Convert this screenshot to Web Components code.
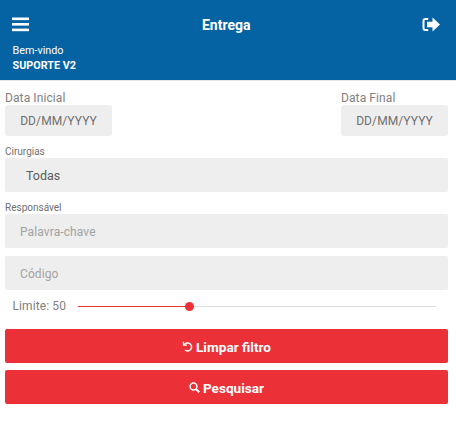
<!DOCTYPE html>
<html lang="pt"><head><meta charset="utf-8"><title>Entrega</title>
<style>
html,body{margin:0;padding:0;background:#fff;font-family:Roboto,"Liberation Sans",sans-serif;}
app-form{display:flex;flex-direction:column;padding:0 8px 0 5px;}
</style></head><body>
<app-header></app-header>
<app-form>
  <date-row></date-row>
  <field-box label="Cirurgias" value="Todas" style="margin-top:9px"></field-box>
  <field-box label="Responsável" placeholder="Palavra-chave" style="margin-top:9px"></field-box>
  <field-box placeholder="Código" style="margin-top:8px"></field-box>
  <limit-slider></limit-slider>
  <red-button icon="undo" style="margin-top:13px">Limpar filtro</red-button>
  <red-button icon="search" style="margin-top:7px">Pesquisar</red-button>
</app-form>
<script>
const def=(n,html)=>customElements.define(n,class extends HTMLElement{
  connectedCallback(){ if(this.shadowRoot)return; const s=this.attachShadow({mode:'open'}); s.innerHTML=typeof html==='function'?html(this):html; }
});
def('app-header',`<style>
:host{display:block;height:80px;background:#0663a3;border-bottom:1px solid #e3e6e8;color:#fff}
.top{display:grid;grid-template-columns:1fr auto 1fr;align-items:center;height:26px;padding:11px 16px 1px 12px}
.t{font-size:14px;font-weight:700;line-height:26px;transform:translate(.2px,.5px)}
svg{display:block;fill:#fff}
.r{justify-self:end}
.sub{padding:5px 0 0 12.5px;font-size:10.8px;line-height:15px}
b{display:block;font-weight:700}
</style>
<div class="top">
<svg width="17" height="15" viewBox="0 0 17 15"><rect y="0.5" width="17" height="2.6"/><rect y="6" width="17" height="2.6"/><rect y="11.6" width="17" height="2.6"/></svg>
<div class="t">Entrega</div>
<svg class="r" width="18" height="15" viewBox="0 0 18 15"><path d="M6.2 1H3.4C1.6 1 .5 2.2.5 4v7c0 1.800 1.100 3 2.900 3h2.800v-2H3.500c-.7 0-1-.4-1-1V4c0-.6.3-1 1-1h2.700z"/><path d="M10.500.6 18 7.500l-7.500 6.900V10.300H5V4.700h5.500z"/></svg>
</div>
<div class="sub">Bem-vindo<b>SUPORTE V2</b></div>`);
def('date-field',h=>`<style>
:host{display:block;width:107px}
label{display:block;font-size:12px;line-height:14px;color:#808080;letter-spacing:.1px}
div{height:31px;line-height:32px;background:#eee;border-radius:3px;text-align:center;font-size:12px;color:#6e6e6e;letter-spacing:.1px}
</style><label>${h.getAttribute('label')}</label><div>DD/MM/YYYY</div>`);
def('date-row',`<style>:host{display:flex;justify-content:space-between;padding-top:10px}</style>
<date-field label="Data Inicial"></date-field><date-field label="Data Final"></date-field>`);
def('field-box',h=>{const l=h.getAttribute('label'),v=h.getAttribute('value'),p=h.getAttribute('placeholder');return `<style>
:host{display:block}
label{display:block;font-size:10px;line-height:13px;color:#707070}
div{height:34px;line-height:35px;background:#eee;border-radius:2px;font-size:12px}
.v{padding-left:21px;color:#5c5c5c;font-size:12.500px;line-height:36px}
.p{padding-left:15px;color:#a2a2a2;letter-spacing:.1px;line-height:36px}
</style>${l?`<label>${l}</label>`:''}<div class="${v?'v':'p'}">${v||p}</div>`});
def('limit-slider',`<style>
:host{display:flex;align-items:center;height:20px;margin-top:6px;padding-left:7.5px;font-size:12px;color:#808080}
span{width:65.500px;letter-spacing:.1px}
.track{position:relative;width:358px;height:1px;background:#dcdcdc}
.fill{width:111px;height:1px;background:#ed3237}
.thumb{position:absolute;left:107px;top:-4px;width:9px;height:9px;border-radius:50%;background:#ed3237}
</style><span>Limite: 50</span><div class="track"><div class="fill"></div><div class="thumb"></div></div>`);
const icons={undo:`<svg width="11" height="11" viewBox="0 0 11 11" fill="none" stroke="#fff" stroke-width="1.500"><path d="M2.200 3.800A4 4 0 1 1 3 9"/><path d="M1.500 .8v3.400h3.400" stroke-width="1.300"/></svg>`,
search:`<svg width="11" height="11" viewBox="0 0 11 11" fill="none" stroke="#fff"><circle cx="4.500" cy="4.500" r="3.400" stroke-width="1.500"/><path d="M7 7l3.200 3.200" stroke-width="2"/></svg>`};
def('red-button',h=>`<style>
:host{display:flex;align-items:center;justify-content:center;gap:3px;height:34px;background:#ec3038;border-radius:2px;color:#fff;font-size:13.600px;font-weight:700}
svg{display:block}
span{display:block;transform:translateY(.5px)}
</style>${icons[h.getAttribute('icon')]}<span><slot></slot></span>`);
</script>
</body></html>
